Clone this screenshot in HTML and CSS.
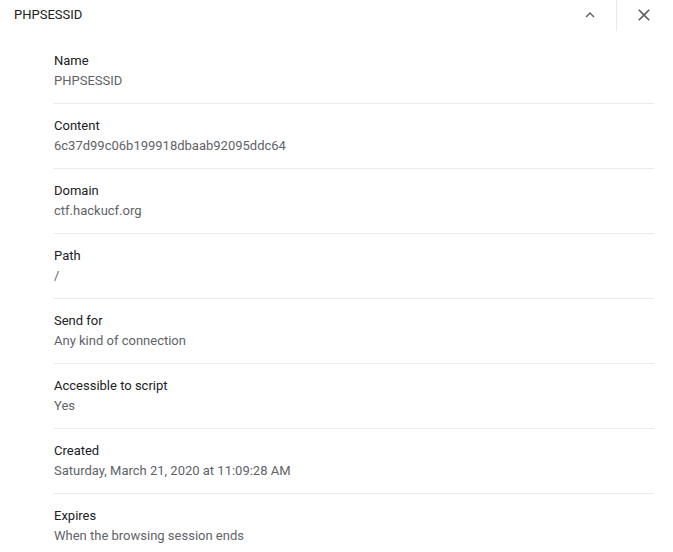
FILE: index.html
```html
<!DOCTYPE html>
<html>
<head>
<meta charset="utf-8">
<link rel="stylesheet" href="styles.css">
</head>
<body>
<div class="header">
  <div class="title">PHPSESSID</div>
  <button class="icon-btn chevron" aria-label="Collapse">
    <svg width="20" height="20" viewBox="0 0 24 24"><path d="M12 8l-6 6 1.41 1.41L12 10.83l4.59 4.58L18 14z" fill="#5f6368"/></svg>
  </button>
  <div class="sep"></div>
  <button class="icon-btn close" aria-label="Close">
    <svg width="20" height="20" viewBox="0 0 24 24"><path d="M19 6.41L17.59 5 12 10.59 6.41 5 5 6.41 10.59 12 5 17.59 6.41 19 12 13.41 17.59 19 19 17.59 13.41 12z" fill="#5f6368"/></svg>
  </button>
</div>
<div class="list">
  <div class="row"><div class="label">Name</div><div class="value">PHPSESSID</div></div>
  <div class="row"><div class="label">Content</div><div class="value">6c37d99c06b199918dbaab92095ddc64</div></div>
  <div class="row"><div class="label">Domain</div><div class="value">ctf.hackucf.org</div></div>
  <div class="row"><div class="label">Path</div><div class="value">/</div></div>
  <div class="row"><div class="label">Send for</div><div class="value">Any kind of connection</div></div>
  <div class="row"><div class="label">Accessible to script</div><div class="value">Yes</div></div>
  <div class="row"><div class="label">Created</div><div class="value">Saturday, March 21, 2020 at 11:09:28 AM</div></div>
  <div class="row"><div class="label">Expires</div><div class="value">When the browsing session ends</div></div>
</div>
</body>
</html>
```
FILE: styles.css
```css
html, body {
  margin: 0;
  padding: 0;
  background: #fff;
  font-family: Roboto, "Liberation Sans", sans-serif;
  font-size: 13px;
  color: #202124;
}
.header {
  height: 39px;
  display: flex;
  align-items: flex-start;
  padding-left: 14px;
}
.title {
  flex: 1;
  line-height: 30px;
  color: #202124;
}
.icon-btn {
  border: none;
  background: none;
  padding: 0;
  width: 30px;
  height: 30px;
  display: flex;
  align-items: center;
  justify-content: center;
  cursor: pointer;
}
.chevron {
  margin-right: 11px;
}
.chevron svg {
  width: 18px;
  height: 18px;
}
.sep {
  width: 1px;
  height: 31px;
  background: #e8eaed;
}
.close {
  margin-left: 12px;
  margin-right: 14px;
}
.list {
  margin-left: 54px;
  margin-right: 19px;
}
.row {
  padding: 12px 0 12px;
  border-bottom: 1px solid #e8eaed;
  line-height: 20px;
}
.row:last-child {
  border-bottom: none;
}
.label {
  color: #202124;
}
.value {
  color: #5f6368;
}
```
